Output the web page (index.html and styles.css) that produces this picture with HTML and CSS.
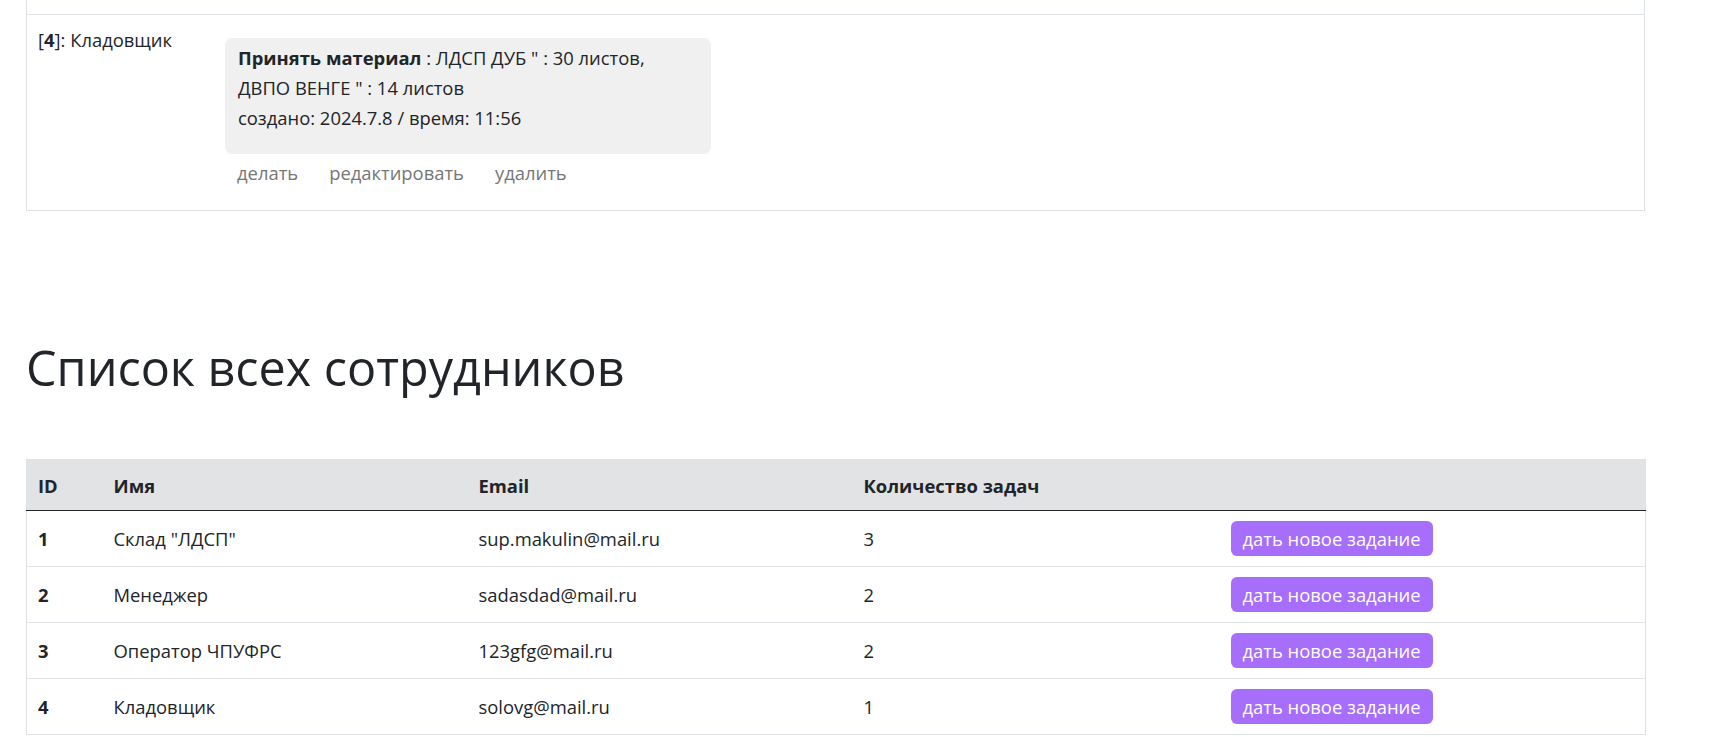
FILE: index.html
```html
<!DOCTYPE html>
<html lang="ru">
<head>
<meta charset="utf-8">
<title>Сотрудники</title>
<link rel="stylesheet" href="styles.css">
</head>
<body>
<div class="page">
  <div class="tasks">
    <div class="task-row task-row-prev"></div>
    <div class="task-row">
      <div class="task-owner">[<b>4</b>]: Кладовщик</div>
      <div class="task-main">
        <div class="task-box">
          <p class="task-text"><b>Принять материал</b> : ЛДСП ДУБ " : 30 листов, ДВПО ВЕНГЕ " : 14 листов</p>
          <p class="task-date">создано: 2024.7.8 / время: 11:56</p>
        </div>
        <div class="task-links">
          <a class="task-link" href="#">делать</a>
          <a class="task-link" href="#">редактировать</a>
          <a class="task-link" href="#">удалить</a>
        </div>
      </div>
    </div>
  </div>

  <h1 class="title">Список всех сотрудников</h1>

  <table class="staff">
    <colgroup>
      <col class="c-id"><col class="c-name"><col class="c-email"><col class="c-count"><col class="c-act">
    </colgroup>
    <thead>
      <tr><th>ID</th><th>Имя</th><th>Email</th><th>Количество задач</th><th></th></tr>
    </thead>
    <tbody>
      <tr><td class="id">1</td><td>Склад "ЛДСП"</td><td>sup.makulin@mail.ru</td><td>3</td><td><a class="btn" href="#">дать новое задание</a></td></tr>
      <tr><td class="id">2</td><td>Менеджер</td><td>sadasdad@mail.ru</td><td>2</td><td><a class="btn" href="#">дать новое задание</a></td></tr>
      <tr><td class="id">3</td><td>Оператор ЧПУФРС</td><td>123gfg@mail.ru</td><td>2</td><td><a class="btn" href="#">дать новое задание</a></td></tr>
      <tr><td class="id">4</td><td>Кладовщик</td><td>solovg@mail.ru</td><td>1</td><td><a class="btn" href="#">дать новое задание</a></td></tr>
    </tbody>
  </table>
</div>
</body>
</html>
```

FILE: styles.css
```css
* { box-sizing: border-box; }
html, body { margin: 0; padding: 0; background: #fff; }
body {
  font-family: "Open Sans", "Noto Sans", sans-serif;
  font-size: 18.4px;
  color: #212529;
}
.page {
  padding: 0 85px 0 26px;
}
.tasks {
  border-left: 1px solid #dee2e6;
  border-right: 1px solid #dee2e6;
}
.task-row {
  display: flex;
  border-bottom: 1px solid #dee2e6;
  padding: 10px 0 22px 0;
}
.task-row-prev {
  height: 15px;
  padding: 0;
}
.task-owner {
  width: 198px;
  padding-left: 11px;
  line-height: 30px;
  flex: none;
}
.task-main {
  padding-top: 13px;
}
.task-box {
  width: 486px;
  background: #f0f0f0;
  border-radius: 7px;
  padding: 5px 13px 21px 13px;
}
.task-box p {
  margin: 0;
  line-height: 30px;
}
.task-links {
  display: flex;
  gap: 31px;
  padding-left: 12px;
  margin-top: 4px;
  line-height: 30px;
}
.task-link {
  color: #767676;
  text-decoration: none;
}
.title {
  margin: 126px 0 0 0;
  font-size: 48.5px;
  font-weight: 500;
  line-height: 60px;
  color: #212529;
}
.staff {
  margin-top: 62px;
  width: 100%;
  border-collapse: collapse;
  table-layout: fixed;
  border-left: 1px solid #dee2e6;
  border-right: 1px solid #dee2e6;
}
.c-id { width: 76px; }
.c-name { width: 365px; }
.c-email { width: 385px; }
.c-count { width: 367px; }
.c-act { width: 426px; }
.staff th {
  background: #e2e3e5;
  text-align: left;
  font-weight: 700;
  height: 51px;
  padding: 3px 11px 0 11px;
  border-bottom: 1px solid #212529;
  vertical-align: middle;
}
.staff td {
  height: 56px;
  padding: 0 11px;
  border-bottom: 1px solid #dee2e6;
  vertical-align: middle;
}
.staff td.id { font-weight: 700; }
.btn {
  display: inline-block;
  background: #a66efa;
  color: #fff;
  text-decoration: none;
  border-radius: 6px;
  padding: 0 12px;
  height: 35px;
  line-height: 35px;
}
```
